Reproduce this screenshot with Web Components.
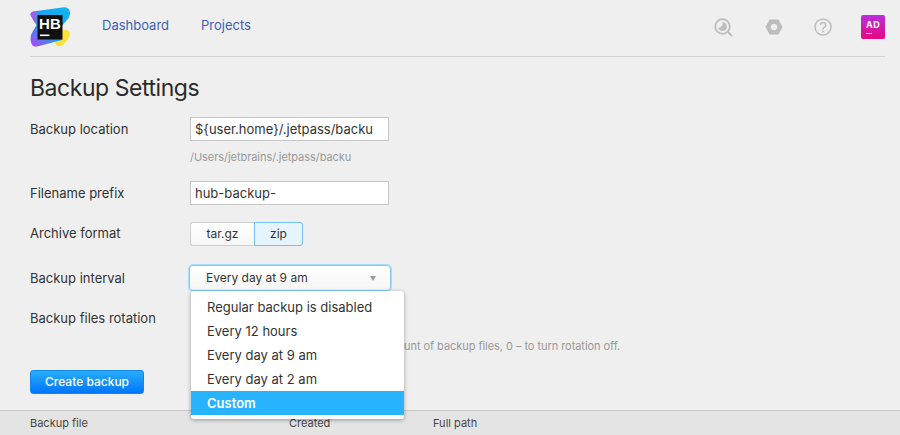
<!DOCTYPE html>
<html lang="en">
<head>
<meta charset="utf-8">
<title>Backup Settings</title>
<style>
  html, body { margin: 0; height: 100%; overflow: hidden; }
  body { background: #efefef; color: #333; font: 13px/20px Inter, "Noto Sans", sans-serif; }
</style>
</head>
<body>
<hub-header></hub-header>
<backup-page></backup-page>
<backup-table></backup-table>

<script>
class HubLogo extends HTMLElement {
  constructor() {
    super();
    this.attachShadow({ mode: "open" });
    this.shadowRoot.innerHTML = `
      <style>
        :host { display: block; width: 40px; height: 40px; position: relative; }
        svg { display: block; position: absolute; inset: 0; }
        span {
          position: absolute; left: 8px; top: 10px; width: 24px; text-align: center;
          font: 700 15px/13px "Liberation Sans", Inter, sans-serif; color: #fff; letter-spacing: .2px;
        }
      </style>
      <svg width="40" height="40" viewBox="30 7 40 40">
        <defs>
          <linearGradient id="g" x1="0.1" y1="1" x2="0.9" y2="0">
            <stop offset="0" stop-color="#a64cf0"/>
            <stop offset=".4" stop-color="#1d9bf6"/>
            <stop offset="1" stop-color="#12b5ee"/>
          </linearGradient>
          <linearGradient id="p" x1="0" y1="0" x2="1" y2="0">
            <stop offset="0" stop-color="#d24bd8"/>
            <stop offset="1" stop-color="#d24bd8" stop-opacity="0"/>
          </linearGradient>
        </defs>
        <path d="M60 31 Q69 28 70 33 Q70.500 38 62 45.500 Q57 48 55 43z" fill="#fde13b"/>
        <path d="M30.500 15 Q30 12.500 33 11.500 L62 7.500 Q69 6.500 70 12 Q70.500 17 66 21 L62 26 L62 40 L37 46.500 Q32 47.500 31 42 Q29.500 36 33 31 L36.500 25 Q33 20 30.500 15z" fill="url(#g)"/>
        <path d="M30.500 15 Q30 12.500 33 11.500 L40 10.500 L38 24 L36.500 25 Q33 20 30.500 15z" fill="url(#p)"/>
        <rect x="37.500" y="15" width="25" height="24.500" fill="#111"/>
        <rect x="40" y="34.500" width="9.500" height="1.600" fill="#fff"/>
      </svg>
      <span>HB</span>
    `;
  }
}

class HubHeader extends HTMLElement {
  constructor() {
    super();
    this.attachShadow({ mode: "open" });
    this.shadowRoot.innerHTML = `
      <style>
        :host {
          display: flex; align-items: center; height: 57px; box-sizing: border-box; margin: 0 15px 0 30px;
          border-bottom: 1px solid #d4d4d4;
        }
        nav { display: flex; gap: 32px; margin-left: 32px; margin-top: -6px; }
        a { color: #3f5fb8; text-decoration: none; font-size: 13px; }
        .tools { display: flex; align-items: center; margin-left: auto; margin-top: -2px; }
        .tools svg { display: block; }
        .avatar {
          width: 24px; height: 24px; border-radius: 2px; box-sizing: border-box; padding: 4px 0 0 5px;
          background: linear-gradient(#b92fe0, #e8067c); color: #fff;
          font: 700 9px/12px Inter, sans-serif; letter-spacing: .5px; position: relative;
        }
        .avatar::after {
          content: ""; position: absolute; left: 5px; top: 18px; width: 6px; height: 1px; background: #f6b8dc;
        }
      </style>
      <hub-logo style="margin-top:-2px"></hub-logo>
      <nav><a href="#">Dashboard</a><a href="#">Projects</a></nav>
      <div class="tools">
        <svg width="19" height="19" viewBox="0 0 19 19" fill="none" style="margin-right:32px">
          <circle cx="8.500" cy="8.500" r="7.300" stroke="#bdbdbd" stroke-width="1.800"/>
          <path d="M8.500 4.300a4.300 4.300 0 1 1 -4.100 5.600 a4.500 4.500 0 0 0 4.100 -5.600z" fill="#bdbdbd"/>
          <path d="M13.800 13.800 L18 18" stroke="#bdbdbd" stroke-width="1.800"/>
        </svg>
        <svg width="18" height="16" viewBox="0 0 18 16" style="margin-right:31px">
          <path fill-rule="evenodd" d="M4.500 0.500 H13.500 L17.500 8 L13.500 15.500 H4.500 L0.500 8z M9 4.700a3.300 3.300 0 1 0 .01 0z" fill="#bdbdbd"/>
        </svg>
        <svg width="18" height="18" viewBox="0 0 18 18" fill="none" style="margin-right:29px">
          <circle cx="9" cy="9" r="8" stroke="#bdbdbd" stroke-width="1.500"/>
          <path d="M6.500 7 a2.600 2.600 0 1 1 4 2.200 q-1.500 .9 -1.500 2.200" stroke="#bdbdbd" stroke-width="1.500"/>
          <circle cx="9" cy="13.500" r=".9" fill="#bdbdbd"/>
        </svg>
        <div class="avatar">AD</div>
      </div>
    `;
  }
}

class FormRow extends HTMLElement {
  constructor() {
    super();
    this.attachShadow({ mode: "open" });
    this.shadowRoot.innerHTML = `
      <style>
        :host { display: grid; grid-template-columns: 160px 1fr; align-items: start; }
        .label { padding-top: 2px; color: #333; }
      </style>
      <div class="label"><slot name="label"></slot></div>
      <div><slot></slot><slot name="hint"></slot></div>
    `;
  }
}

class TextField extends HTMLElement {
  constructor() {
    super();
    this.attachShadow({ mode: "open" });
    this.shadowRoot.innerHTML = `
      <style>
        :host {
          display: block; width: 199px; height: 24px; box-sizing: border-box; padding: 0 4px;
          background: #fff; border: 1px solid #c6c6c6; font-size: 13px; line-height: 22px;
          color: #333; white-space: nowrap; overflow: hidden;
        }
      </style>
      <slot></slot>
    `;
  }
}

class ButtonGroup extends HTMLElement {
  constructor() {
    super();
    this.attachShadow({ mode: "open" });
    this.shadowRoot.innerHTML = `
      <style>
        :host { display: flex; height: 24px; font-size: 12px; line-height: 22px; color: #333; }
        div { box-sizing: border-box; text-align: center; border: 1px solid #cfcfcf; }
        .a { width: 64px; background: linear-gradient(#fff, #f6f6f6); border-right: 0; border-radius: 3px 0 0 3px; }
        .b { width: 49px; background: #e5f4ff; border-color: #6cc1f7; border-radius: 0 3px 3px 0; }
      </style>
      <div class="a">tar.gz</div><div class="b">zip</div>
    `;
  }
}

class SelectMenu extends HTMLElement {
  constructor() {
    super();
    this.attachShadow({ mode: "open" });
    const items = ["Regular backup is disabled", "Every 12 hours", "Every day at 9 am", "Every day at 2 am", "Custom"];
    this.shadowRoot.innerHTML = `
      <style>
        :host { display: block; position: relative; width: 202px; height: 26px; margin-left: -1px; }
        .btn {
          box-sizing: border-box; height: 26px; padding: 0 16px; border: 1px solid #7fcafb; border-radius: 4px;
          background: linear-gradient(#fff, #f6f6f6); box-shadow: 0 0 0 1px #a9dcfc;
          font-size: 12px; line-height: 24px; color: #333; position: relative;
        }
        .btn i {
          position: absolute; right: 14px; top: 10px; width: 0; height: 0;
          border: 3.500px solid transparent; border-top: 5px solid #999; border-bottom: 0;
        }
        ul {
          position: absolute; left: 2px; top: 26px; width: 213px; margin: 0; padding: 4px 0;
          box-sizing: border-box; list-style: none; background: #fff; border-radius: 3px;
          box-shadow: 0 1px 4px rgba(0,0,0,.35); z-index: 2;
        }
        li { height: 24px; line-height: 24px; padding: 0 16px; font-size: 13px; color: #333; }
        li.on { background: #27b3fe; color: #fff; font-weight: 600; }
      </style>
      <div class="btn"><slot></slot><i></i></div>
      <ul>${items.map(t => `<li class="${t === "Custom" ? "on" : ""}">${t}</li>`).join("")}</ul>
    `;
  }
}

class PrimaryButton extends HTMLElement {
  constructor() {
    super();
    this.attachShadow({ mode: "open" });
    this.shadowRoot.innerHTML = `
      <style>
        :host {
          display: block; width: 114px; height: 24px; box-sizing: border-box; text-align: center;
          background: linear-gradient(#27adfd, #0076fb); border-radius: 3px; border: 1px solid #1187ef;
          color: #fff; font-weight: 500; font-size: 12px; line-height: 22px;
        }
      </style>
      <slot></slot>
    `;
  }
}

class BackupPage extends HTMLElement {
  constructor() {
    super();
    this.attachShadow({ mode: "open" });
    this.shadowRoot.innerHTML = `
      <style>
        :host { display: block; padding: 0 30px; height: 353px; box-sizing: border-box; }
        h1 { margin: 0; padding-top: 16px; font-weight: 400; font-size: 23px; line-height: 30px; color: #2b2b2b; letter-spacing: -.45px; }
        .hint { font-size: 11px; line-height: 16px; color: #999; white-space: nowrap; letter-spacing: -.05px; }
        .rot { height: 24px; }
      </style>
      <h1>Backup Settings</h1>
      <form-row style="margin-top:14px">
        <span slot="label">Backup location</span>
        <text-field>\${user.home}/.jetpass/backu</text-field>
        <div class="hint" slot="hint" style="margin-top:8px">/Users/jetbrains/.jetpass/backu</div>
      </form-row>
      <form-row style="margin-top:16px">
        <span slot="label">Filename prefix</span>
        <text-field>hub-backup-</text-field>
      </form-row>
      <form-row style="margin-top:17px">
        <span slot="label" style="position:relative;top:-1px">Archive format</span>
        <button-group></button-group>
      </form-row>
      <form-row style="margin-top:19px">
        <span slot="label" style="position:relative;top:1px">Backup interval</span>
        <select-menu>Every day at 9 am</select-menu>
      </form-row>
      <form-row style="margin-top:15px">
        <span slot="label">Backup files rotation</span>
        <div class="rot"></div>
        <div class="hint" slot="hint" style="margin:8px 0 0 214px">unt of backup files, 0 – to turn rotation off.</div>
      </form-row>
      <primary-button style="margin-top:16px">Create backup</primary-button>
    `;
  }
}

class BackupTable extends HTMLElement {
  constructor() {
    super();
    this.attachShadow({ mode: "open" });
    this.shadowRoot.innerHTML = `
      <style>
        :host {
          display: grid; grid-template-columns: 259px 144px 1fr; height: 25px; box-sizing: border-box;
          padding-left: 30px; background: #e4e4e4; border-top: 1px solid #c9c9c9;
          font-size: 11px; line-height: 24px; color: #444;
        }
      </style>
      <div>Backup file</div><div>Created</div><div>Full path</div>
    `;
  }
}

customElements.define("hub-logo", HubLogo);
customElements.define("hub-header", HubHeader);
customElements.define("form-row", FormRow);
customElements.define("text-field", TextField);
customElements.define("button-group", ButtonGroup);
customElements.define("select-menu", SelectMenu);
customElements.define("primary-button", PrimaryButton);
customElements.define("backup-page", BackupPage);
customElements.define("backup-table", BackupTable);
</script>
</body>
</html>
